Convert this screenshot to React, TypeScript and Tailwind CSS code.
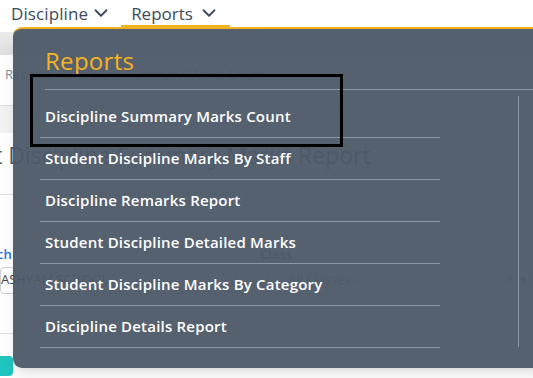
import { ChevronDown } from 'lucide-react';

const reportItems = [
  'Discipline Summary Marks Count',
  'Student Discipline Marks By Staff',
  'Discipline Remarks Report',
  'Student Discipline Detailed Marks',
  'Student Discipline Marks By Category',
  'Discipline Details Report',
];

export default function App() {
  return (
    <div className="relative w-[533px] h-[378px] overflow-hidden bg-white font-['Open_Sans',sans-serif]">
      {/* Top nav */}
      <nav className="flex h-[27px] items-end text-[17px] text-[#3d4b5c]">
        <div className="flex items-center gap-[2px] pl-[11px] pb-[3px] pr-[9px] leading-none">
          <span className="tracking-[0.1px]">Discipline</span>
          <ChevronDown className="h-[22px] w-[22px]" strokeWidth={2} />
        </div>
        <div className="flex items-center gap-[5px] border-b-2 border-[#f4b11f] px-[10px] pb-[1px] leading-none">
          <span>Reports</span>
          <ChevronDown className="h-[22px] w-[22px]" strokeWidth={2} />
        </div>
      </nav>

      {/* Page underneath */}
      <div className="mt-[5px] h-[23px] bg-gradient-to-b from-[#ececec] to-[#dedede]" />
      <div className="border-b border-[#dcdcdc] px-[5px] pt-[10px] pb-[20px] text-[13px] text-[#7d8fa3]">
        Reports / Discipline Summary Marks Count
      </div>
      <div className="h-[27px] bg-[#f2f2f2]" />
      <div className="ml-[-6px] mt-[5px] text-[23px] text-[#505a66]">t Discipline Summary Marks Report</div>
      <div className="mt-[22px] h-px bg-[#e3e3e3]" />
      <div className="mt-[50px] flex gap-[22px] pr-[2px]">
        <div className="w-[238px]">
          <div className="-ml-[33px] text-[13px] font-semibold text-[#2f6fd6]">Branch</div>
        </div>
        <div className="flex-1">
          <div className="text-[13px] font-semibold text-[#3f6385]">Class</div>
        </div>
      </div>
      <div className="mt-[2px] flex gap-[31px] pr-[1px]">
        <div className="flex h-[27px] w-[236px] items-center rounded border border-[#cfcfcf] text-[13px] text-[#444]">
          ASHYAM SCHOOL
        </div>
        <div className="flex h-[27px] flex-1 items-center justify-between rounded border border-[#cfcfcf] px-[20px] pr-[4px] text-[13px] text-[#888]">
          <span>All Classes -</span>
          <span className="flex gap-[6px] text-[#888]">
            <span>×</span>
            <span>▾</span>
          </span>
        </div>
      </div>
      <div className="mt-[39px] h-px bg-[#e3e3e3]" />
      <div className="mt-[22px] h-[20px] w-[13px] rounded-r bg-[#20c5c0]" />

      {/* Reports dropdown */}
      <div className="absolute left-[13px] top-[27px] h-[341px] w-[540px] rounded-l-[9px] border-t-2 border-[#f4b11f] bg-[#4d5967]/95 shadow-lg">
        <div className="pl-[32px] pt-[17px] text-[24px] leading-[30px] tracking-[0.3px] text-[#f5b323]">Reports</div>
        <div className="ml-[32px] mt-[13px] h-px bg-[#8b97a4]" />
        <div className="flex">
          <ul className="ml-[27px] w-[400px] pt-[6px]">
            {reportItems.map((item) => (
              <li
                key={item}
                className="flex h-[42px] items-center border-b border-[#8b97a4] pl-[5px] text-[15px] font-semibold tracking-[0.2px] text-white"
              >
                {item}
              </li>
            ))}
          </ul>
          <div className="ml-[78px] mt-[6px] h-[251px] w-px bg-[#8b97a4]" />
        </div>
      </div>

      {/* Highlight box */}
      <div className="absolute left-[30px] top-[74px] h-[73px] w-[313px] border-[3px] border-black" />
    </div>
  );
}
